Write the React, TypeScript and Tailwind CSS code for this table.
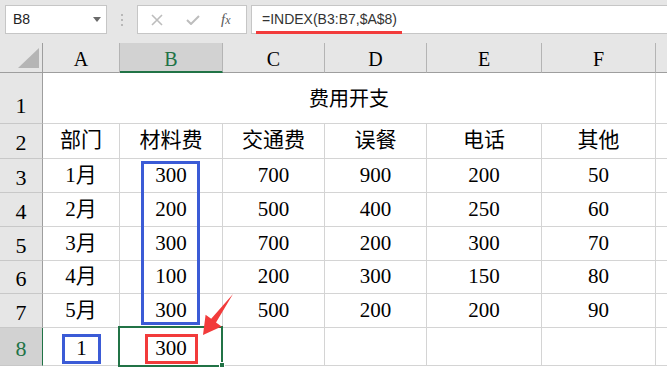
import React from "react";

const rows = [
  ["部门", "材料费", "交通费", "误餐", "电话", "其他"],
  ["1月", "300", "700", "900", "200", "50"],
  ["2月", "200", "500", "400", "250", "60"],
  ["3月", "300", "700", "200", "300", "70"],
  ["4月", "100", "200", "300", "150", "80"],
  ["5月", "300", "500", "200", "200", "90"],
];

const cols = ["A", "B", "C", "D", "E", "F"];

function RowHead({ n, active }: { n: number; active?: boolean }) {
  return (
    <div
      className={`flex justify-center border-b border-r font-['Liberation_Serif',serif] text-[22px] leading-none ${
        n === 1 ? "items-end pb-[6px]" : "items-center pt-[4px]"
      } ${
        active
          ? "bg-[#d2d2d2] text-[#217346] border-r-[#217346] border-b-[#c8c8c8]"
          : "bg-[#e6e6e6] text-black border-r-[#9e9e9e] border-b-[#c8c8c8]"
      }`}
    >
      {n}
    </div>
  );
}

function Cell({ children }: { children?: React.ReactNode }) {
  return (
    <div className="flex items-center justify-center border-b border-r border-[#d4d4d4] font-['Liberation_Serif','Noto_Sans_CJK_SC',serif] text-[21px] text-black">
      {children}
    </div>
  );
}

export default function App() {
  return (
    <div className="relative h-[368px] w-[667px] overflow-hidden bg-white">
      {/* Formula bar */}
      <div className="flex h-[43px] items-start bg-[#e6e6e6] pl-[5px] pt-[5px] font-['Liberation_Sans',Arial,sans-serif]">
        <div className="flex h-[29px] w-[102px] items-center justify-between border border-[#c6c6c6] bg-white pl-[7px] pr-[5px] text-[14px] text-[#222]">
          <span>B8</span>
          <svg width="8" height="5" viewBox="0 0 8 5">
            <path d="M0 0h8L4 5z" fill="#6a6a6a" />
          </svg>
        </div>
        <div className="flex h-[29px] w-[30px] flex-col items-center justify-center gap-[3px]">
          <span className="h-[2px] w-[2px] bg-[#b8b8b8]" />
          <span className="h-[2px] w-[2px] bg-[#b8b8b8]" />
          <span className="h-[2px] w-[2px] bg-[#b8b8b8]" />
        </div>
        <div className="flex h-[29px] w-[110px] items-center border border-[#c6c6c6] bg-white pl-[13px]">
          <svg width="12" height="12" viewBox="0 0 12 12">
            <path d="M1 1l10 10M11 1L1 11" stroke="#bdbdbd" strokeWidth="1.6" />
          </svg>
          <svg className="ml-[23px]" width="14" height="10" viewBox="0 0 14 10">
            <path d="M1 5l4 4 8-8" stroke="#bdbdbd" strokeWidth="2" fill="none" />
          </svg>
          <span className="ml-[21px] font-['Liberation_Serif',serif] text-[15px] italic text-[#5a5a5a]">
            f<span className="text-[12px]">x</span>
          </span>
        </div>
        <div className="relative ml-[4px] flex h-[29px] flex-1 items-center border border-r-0 border-[#c6c6c6] bg-white pl-[10px] text-[14px] text-[#333]">
          =INDEX(B3:B7,$A$8)
          <span className="absolute bottom-[-1px] left-[4px] h-[3px] w-[146px] bg-[#f23b3b]" />
        </div>
      </div>

      {/* Sheet */}
      <div className="grid grid-cols-[43px_77px_103px_102px_102px_115px_114px_1fr] grid-rows-[30px_51px_35px_34px_34px_34px_33px_34px_38px]">
        <div className="relative border-b border-r border-b-[#9e9e9e] border-r-[#9e9e9e] bg-[#e6e6e6]">
          <svg className="absolute left-0 top-0" width="43" height="29" viewBox="0 0 43 29">
            <path d="M39 5v20H18z" fill="#b5b5b5" />
          </svg>
        </div>
        {cols.map((c) => (
          <div
            key={c}
            className={`flex items-center justify-center border-r border-r-[#b4b4b4] pt-[3px] font-['Liberation_Serif',serif] text-[20px] ${
              c === "B"
                ? "border-b-2 border-b-[#217346] bg-[#d2d2d2] text-[#217346]"
                : "border-b border-b-[#9e9e9e] bg-[#e6e6e6] text-black"
            }`}
          >
            {c}
          </div>
        ))}
        <div className="border-b border-b-[#9e9e9e] bg-[#e6e6e6]" />

        <RowHead n={1} />
        <div className="col-span-6 flex items-center justify-center border-b border-r border-[#d4d4d4] pt-[2px] font-['Liberation_Serif','Noto_Sans_CJK_SC',serif] text-[20px] text-black">
          费用开支
        </div>
        <div className="border-b border-[#d4d4d4]" />

        {rows.map((r, i) => (
          <React.Fragment key={i}>
            <RowHead n={i + 2} />
            {r.map((v, j) => (
              <Cell key={j}>{v}</Cell>
            ))}
            <div className="border-b border-[#d4d4d4]" />
          </React.Fragment>
        ))}

        <RowHead n={8} active />
        <div className="flex items-end justify-center border-b border-r border-[#d4d4d4] pb-[1px] pl-[1px]">
          <div className="flex h-[30px] w-[39px] items-center justify-center border-[3px] border-[#3b5bd6] font-['Liberation_Serif',serif] text-[21px] text-black">
            1
          </div>
        </div>
        <div className="flex items-end justify-center border-b border-r border-[#d4d4d4] pb-[1px]">
          <div className="flex h-[30px] w-[53px] items-center justify-center border-[3px] border-[#f23b3b] font-['Liberation_Serif',serif] text-[21px] text-black">
            300
          </div>
        </div>
        <Cell />
        <Cell />
        <Cell />
        <Cell />
        <div className="border-b border-[#d4d4d4]" />
      </div>

      {/* Blue range outline B3:B7 */}
      <div className="pointer-events-none absolute left-[141px] top-[161px] h-[164px] w-[59px] border-[3px] border-[#3b5bd6]" />
      {/* Active cell B8 */}
      <div className="pointer-events-none absolute left-[118px] top-[326px] h-[41px] w-[105px] border-2 border-[#217346]" />
      <div className="pointer-events-none absolute left-[219px] top-[362px] h-[6px] w-[6px] border border-white bg-[#217346]" />

      <svg className="pointer-events-none absolute left-0 top-0" width="667" height="368" viewBox="0 0 667 368">
        <path d="M203 335L205.6 314.7L211.2 318.8L233 294L216 322.4L221.6 326.5Z" fill="#f23b3b" />
      </svg>
    </div>
  );
}
